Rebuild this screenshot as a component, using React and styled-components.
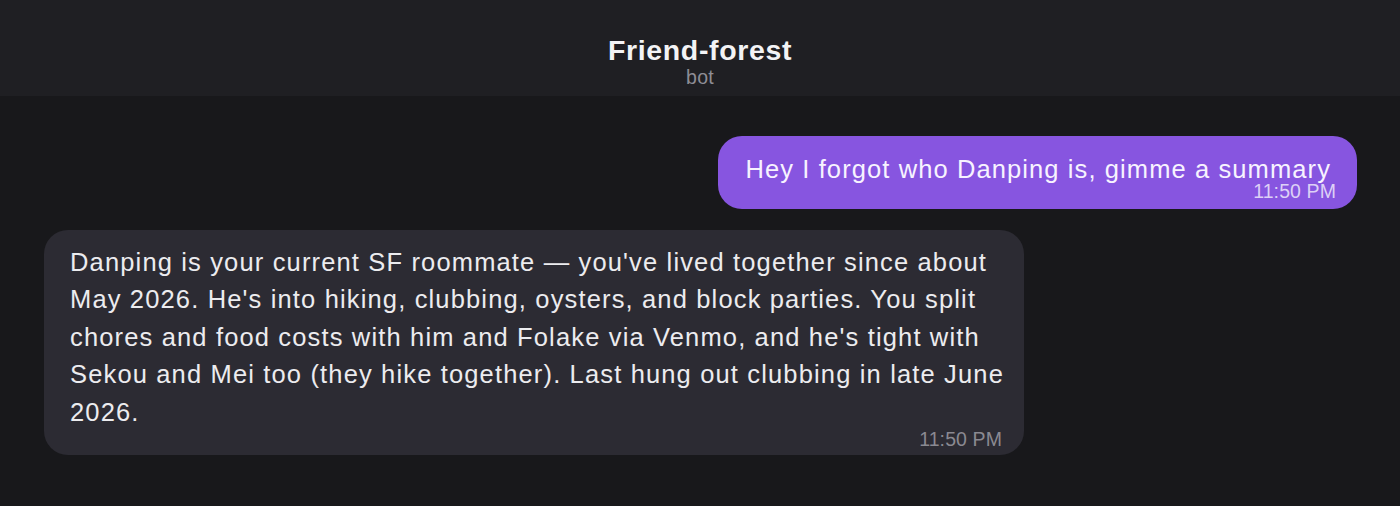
import React from "react";
import styled, { createGlobalStyle } from "styled-components";

const Global = createGlobalStyle`
  html, body { margin: 0; padding: 0; background: #18181b; }
  body { font-family: "Liberation Sans", Arial, sans-serif; -webkit-font-smoothing: antialiased; }
  * { box-sizing: border-box; }
`;

const Page = styled.div`
  min-height: 506px;
  background: #18181b;
  display: flex;
  flex-direction: column;
`;

const Header = styled.header`
  height: 96px;
  padding-top: 33px;
  background: #1f1f23;
  display: flex;
  flex-direction: column;
  align-items: center;
`;

const Title = styled.h1`
  margin: 0;
  font-size: 28.5px;
  line-height: 34px;
  font-weight: 700;
  letter-spacing: 0.65px;
  color: #f3f3f5;
`;

const Subtitle = styled.div`
  font-size: 19.5px;
  line-height: 20px;
  letter-spacing: 0.3px;
  color: #8e8d95;
`;

const Thread = styled.main`
  display: flex;
  flex-direction: column;
  gap: 21px;
  padding: 40px 43px 40px 44px;
`;

const Bubble = styled.div`
  align-self: ${(p) => (p.$mine ? "flex-end" : "flex-start")};
  max-width: 980px;
  display: flex;
  flex-direction: column;
  padding: ${(p) => (p.$mine ? "15px 21px 6px 27px" : "14px 16px 4px 26px")};
  border-radius: 24px;
  background: ${(p) => (p.$mine ? "#8755e0" : "#2c2b33")};
`;

const Text = styled.div`
  font-size: 25.5px;
  line-height: 37.5px;
  letter-spacing: ${(p) => (p.$mine ? "1.1px" : "1.15px")};
  color: ${(p) => (p.$mine ? "#f7f3ff" : "#ececef")};
  padding-right: ${(p) => (p.$mine ? "5px" : "0")};
`;

const Time = styled.div`
  align-self: flex-end;
  font-size: 19.5px;
  line-height: 24px;
  letter-spacing: 0.1px;
  margin-top: ${(p) => (p.$mine ? "-9.7px" : "-4.7px")};
  margin-right: ${(p) => (p.$mine ? "0" : "6px")};
  color: ${(p) => (p.$mine ? "#ddd0f6" : "#8a8991")};
`;

const messages = [
  { id: 1, mine: true, text: "Hey I forgot who Danping is, gimme a summary", time: "11:50 PM" },
  {
    id: 2,
    mine: false,
    text:
      "Danping is your current SF roommate \u2014 you've lived together since about May 2026. He's into hiking, clubbing, oysters, and block parties. You split chores and food costs with him and Folake via Venmo, and he's tight with Sekou and Mei too (they hike together). Last hung out clubbing in late June 2026.",
    time: "11:50 PM",
  },
];

export default function App() {
  return (
    <>
      <Global />
      <Page>
        <Header>
          <Title>Friend-forest</Title>
          <Subtitle>bot</Subtitle>
        </Header>
        <Thread>
          {messages.map((m) => (
            <Bubble key={m.id} $mine={m.mine}>
              <Text $mine={m.mine}>{m.text}</Text>
              <Time $mine={m.mine}>{m.time}</Time>
            </Bubble>
          ))}
        </Thread>
      </Page>
    </>
  );
}
